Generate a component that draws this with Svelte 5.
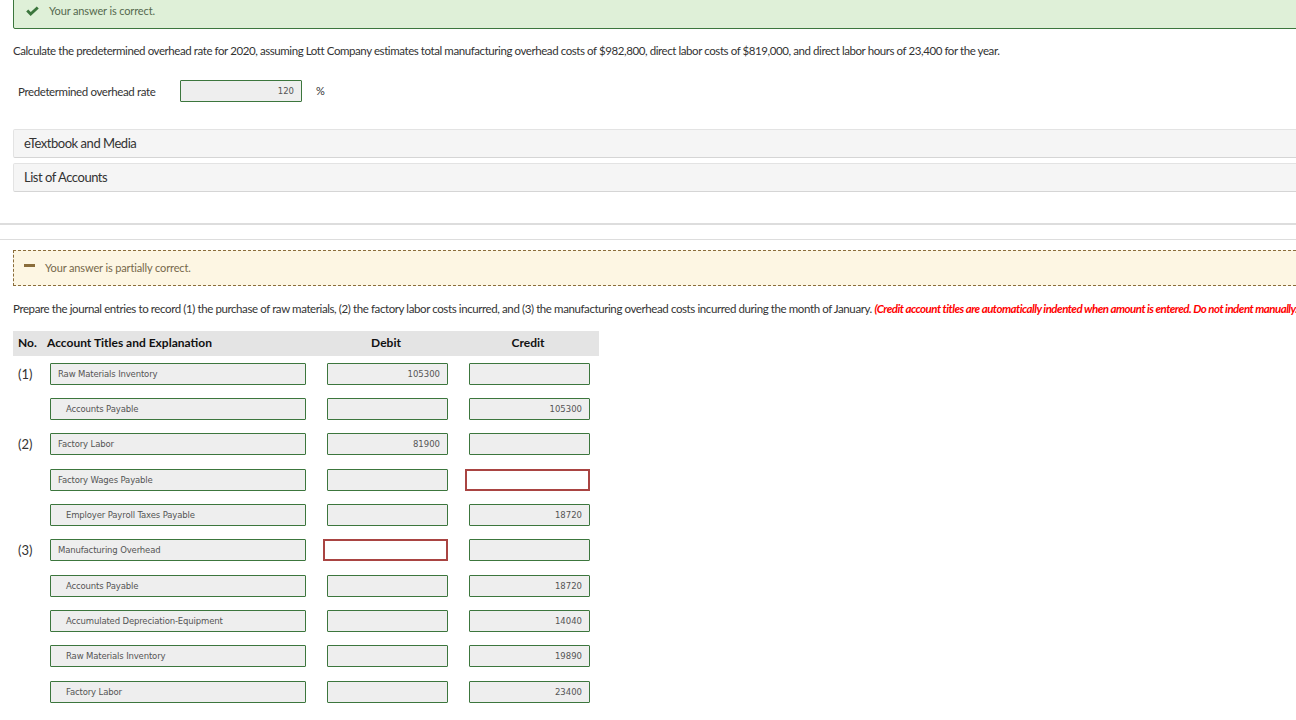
<script lang="ts">
  // One journal line: account title, whether it is indented, and the two amounts.
  interface Line {
    no?: string;
    account: string;
    indent?: boolean;
    debit?: string;
    credit?: string;
    badDebit?: boolean;
    badCredit?: boolean;
  }

  const lines: Line[] = [
    { no: '(1)', account: 'Raw Materials Inventory', debit: '105300' },
    { account: 'Accounts Payable', indent: true, credit: '105300' },
    { no: '(2)', account: 'Factory Labor', debit: '81900' },
    { account: 'Factory Wages Payable', badCredit: true },
    { account: 'Employer Payroll Taxes Payable', indent: true, credit: '18720' },
    { no: '(3)', account: 'Manufacturing Overhead', badDebit: true },
    { account: 'Accounts Payable', indent: true, credit: '18720' },
    { account: 'Accumulated Depreciation-Equipment', indent: true, credit: '14040' },
    { account: 'Raw Materials Inventory', indent: true, credit: '19890' },
    { account: 'Factory Labor', indent: true, credit: '23400' },
  ];
</script>

<div class="page">
  <div class="notice ok">
    <svg class="check" viewBox="0 0 14 11" width="13" height="10" aria-hidden="true">
      <path d="M1.2 5 L5 8.8 L12.8 1.6" fill="none" stroke="#3c763d" stroke-width="3.2" />
    </svg>
    <span>Your answer is correct.</span>
  </div>

  <p class="prompt first">
    Calculate the predetermined overhead rate for 2020, assuming Lott Company estimates total manufacturing overhead costs of $982,800, direct labor costs of $819,000, and direct labor hours of 23,400 for the year.
  </p>

  <div class="rate">
    <span class="rate-label">Predetermined overhead rate</span>
    <div class="field num rate-field">120</div>
    <span class="rate-unit">%</span>
  </div>

  <div class="panel media">eTextbook and Media</div>
  <div class="panel accounts">List of Accounts</div>

  <hr class="rule one" />
  <hr class="rule two" />

  <div class="notice partial">
    <span class="dash"></span>
    <span>Your answer is partially correct.</span>
  </div>

  <p class="prompt second">
    Prepare the journal entries to record (1) the purchase of raw materials, (2) the factory labor costs incurred, and (3) the manufacturing overhead costs incurred during the month of January. <em>(Credit account titles are automatically indented when amount is entered. Do not indent manually.)</em>
  </p>

  <div class="journal">
    <div class="head">
      <span>No.</span>
      <span>Account Titles and Explanation</span>
      <span class="h-amt">Debit</span>
      <span class="h-amt">Credit</span>
    </div>
    <div class="rows">
      {#each lines as line}
        <div class="row">
          <span class="no">{line.no ?? ''}</span>
          <div class="field acct" class:indent={line.indent}>{line.account}</div>
          {#if line.badDebit}
            <div class="field bad"></div>
          {:else}
            <div class="field num">{line.debit ?? ''}</div>
          {/if}
          {#if line.badCredit}
            <div class="field bad"></div>
          {:else}
            <div class="field num">{line.credit ?? ''}</div>
          {/if}
        </div>
      {/each}
    </div>
  </div>
</div>

<style>
  :global(body) {
    margin: 0;
    background: #fff;
    overflow: hidden;
  }
  .page {
    width: 1296px;
    height: 720px;
    overflow: hidden;
    font-family: Lato, "Open Sans", sans-serif;
    font-size: 11.5px;
    color: #333;
    padding-left: 13px;
    box-sizing: border-box;
  }
  .notice {
    display: flex;
    align-items: center;
    margin-right: -20px;
    box-sizing: border-box;
    font-size: 11px;
    letter-spacing: -0.13px;
  }
  .ok {
    height: 37px;
    margin-top: -8px;
    padding-left: 12px;
    gap: 10px;
    background: #dff0d8;
    border: 1px solid #3c763d;
    border-radius: 2px;
    color: #55694e;
  }
  .partial {
    height: 36px;
    padding-left: 10px;
    padding-bottom: 2px;
    gap: 10px;
    background: #fdf6e3;
    border: 1px dashed #8a6d3b;
    color: #76684a;
  }
  .dash {
    width: 11px;
    height: 3px;
    margin-bottom: 3px;
    background: #8a6d3b;
  }
  .prompt {
    margin: 0;
    line-height: 16px;
    white-space: nowrap;
    letter-spacing: -0.42px;
  }
  .prompt.first {
    margin-top: 14px;
  }
  .prompt.second {
    margin-top: 15px;
    letter-spacing: -0.4px;
  }
  .prompt em {
    color: #ff0000;
    font-weight: 700;
    letter-spacing: -0.52px;
  }
  .rate {
    display: flex;
    align-items: center;
    margin-top: 21px;
    padding-left: 5px;
  }
  .rate-label {
    width: 162px;
    letter-spacing: -0.38px;
  }
  .rate-field {
    width: 122px;
  }
  .rate-unit {
    margin-left: 14px;
    padding-bottom: 2px;
    font-size: 11px;
  }
  .field {
    height: 22px;
    box-sizing: border-box;
    background: #eee;
    border: 1px solid #3c763d;
    border-radius: 1px;
    font-family: "DejaVu Sans", sans-serif;
    font-size: 8.5px;
    line-height: 20px;
    color: #555;
    white-space: nowrap;
  }
  .num {
    text-align: right;
    padding-right: 7px;
  }
  .panel {
    height: 29px;
    box-sizing: border-box;
    margin-right: -20px;
    padding-left: 10px;
    background: #f5f5f5;
    border: 1px solid #e3e3e3;
    border-bottom-color: #d5d5d5;
    border-radius: 2px;
    font-size: 13px;
    letter-spacing: -0.47px;
    line-height: 27px;
  }
  .media {
    margin-top: 27px;
  }
  .accounts {
    margin-top: 5px;
  }
  .rule {
    margin: 0 0 0 -13px;
    border: 0;
    border-top: 1px solid #ddd;
  }
  .rule.one {
    margin-top: 31px;
    border-top-width: 2px;
  }
  .rule.two {
    margin-top: 14px;
    margin-bottom: 10px;
  }
  .journal {
    width: 586px;
    margin-top: 14px;
  }
  .head {
    display: grid;
    grid-template-columns: 29px 280px 121px 142px;
    height: 25px;
    box-sizing: border-box;
    align-items: center;
    padding: 0 0 2px 5px;
    background: #e4e4e4;
    color: #111;
    font-weight: 700;
    font-size: 12px;
    white-space: nowrap;
  }
  .h-amt {
    text-align: center;
    padding-right: 3px;
  }
  .h-amt + .h-amt {
    margin-left: 21px;
  }
  .rows {
    display: flex;
    flex-direction: column;
    gap: 13.33px;
    margin-top: 6.7px;
  }
  .row {
    display: grid;
    grid-template-columns: 16px 256px 121px 121px;
    column-gap: 21px;
    align-items: center;
  }
  .acct {
    padding-left: 7px;
    letter-spacing: -0.15px;
  }
  .no {
    padding-left: 5px;
    white-space: nowrap;
    font-size: 13px;
    letter-spacing: 0;
  }
  .acct.indent {
    padding-left: 15px;
  }
  .bad {
    margin-left: -4px;
    background: #fff;
    border: 2px solid #a94442;
    border-radius: 0;
  }
</style>
